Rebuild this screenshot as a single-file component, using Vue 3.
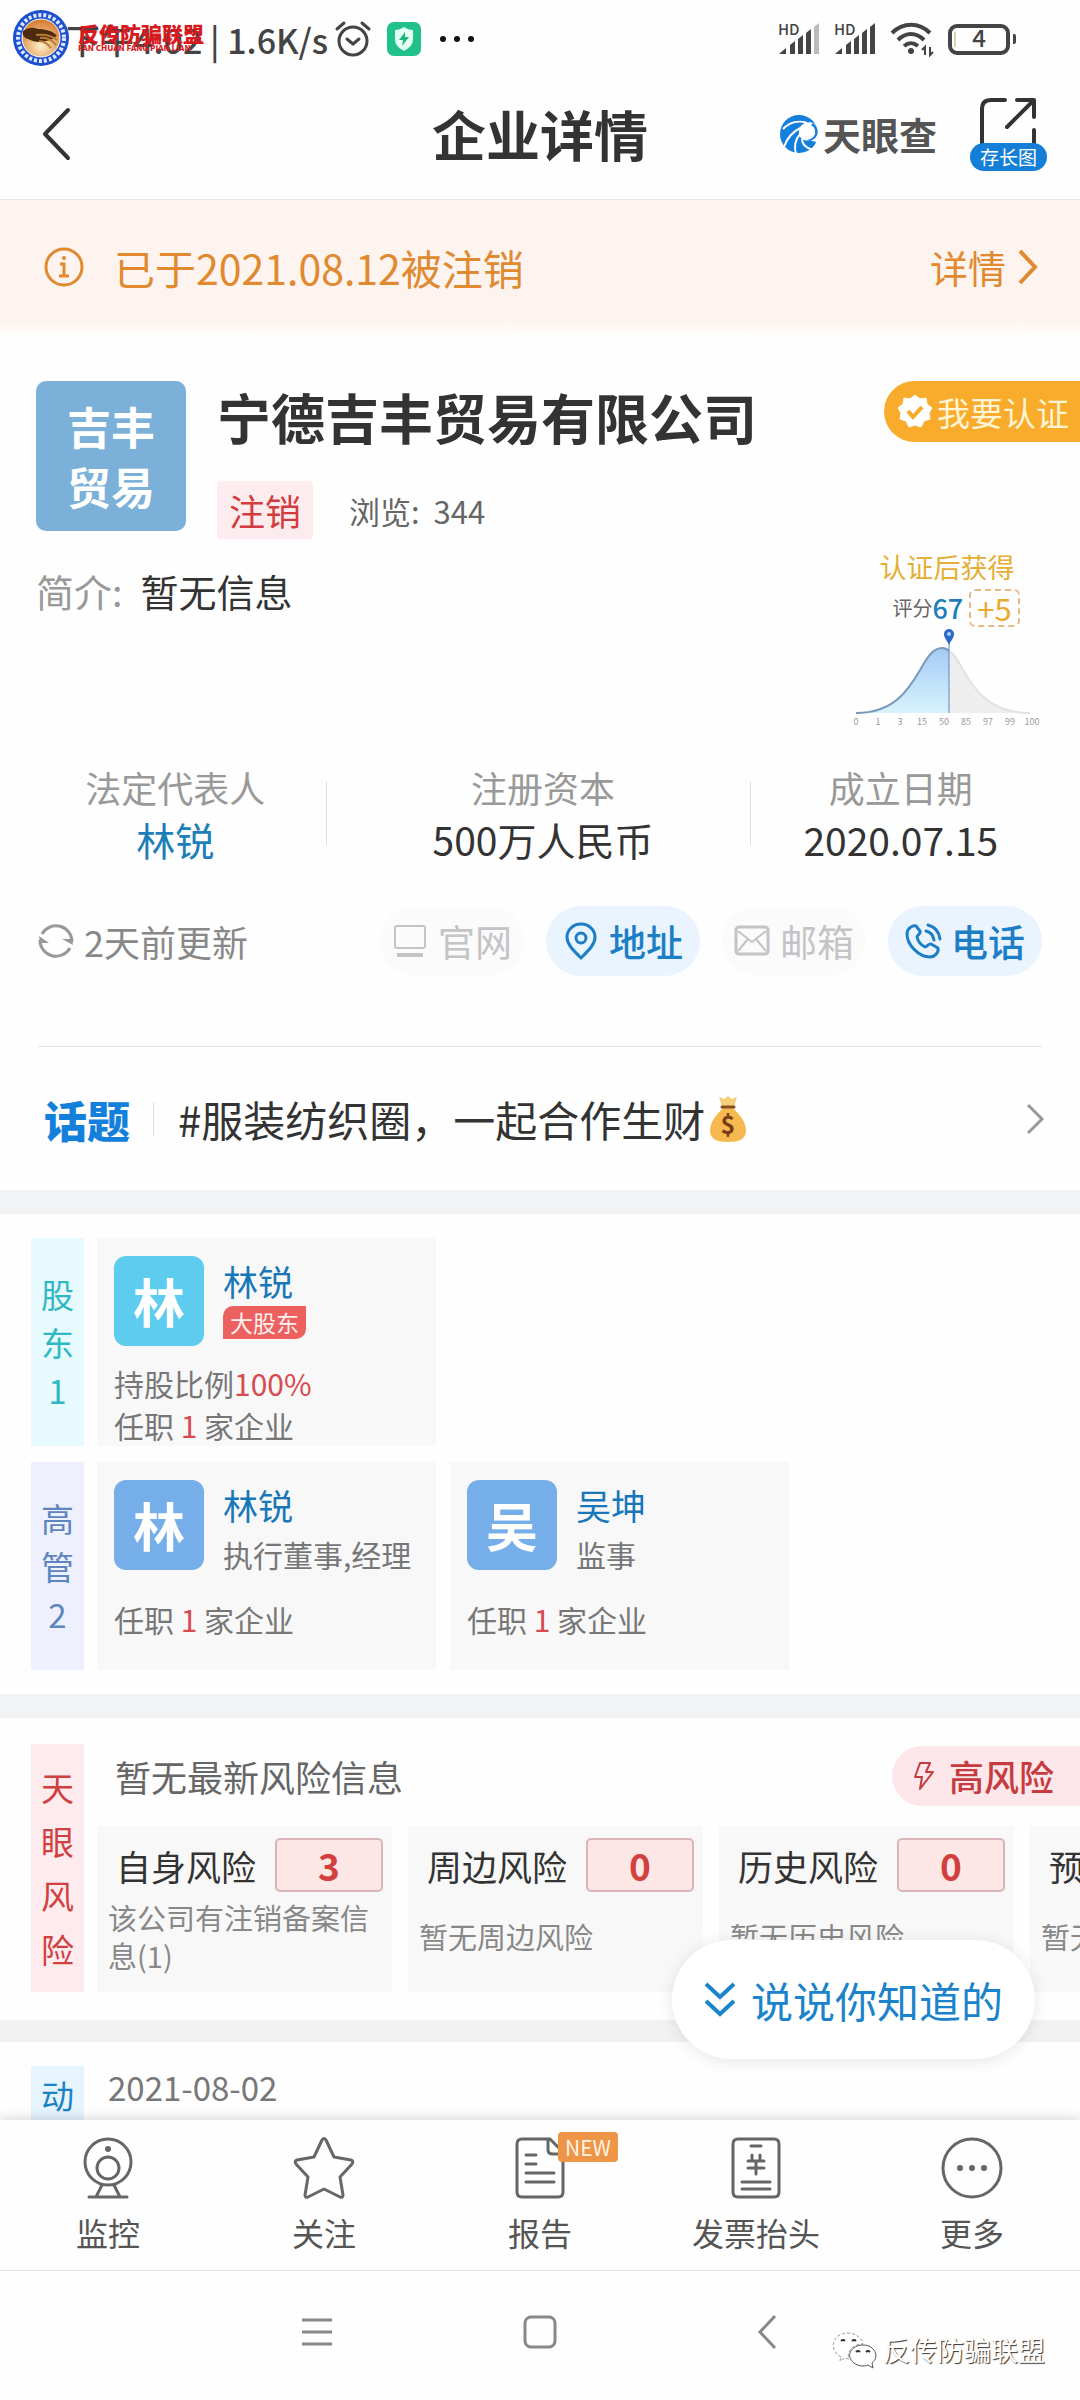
<template>
  <div class="screen">
    <header class="top">
      <div class="status-bar">
        <div class="status-left">
          <span>下午4:02 | 1.6K/s</span>
          <svg class="alarm" viewBox="0 0 36 36" fill="none" stroke="#444" stroke-width="3" stroke-linecap="round">
            <circle cx="18" cy="20" r="14" />
            <path d="M12 18l6 5 6-5M2 8l7-6M34 8l-7-6" />
          </svg>
          <svg class="shield" viewBox="0 0 34 34">
            <rect width="34" height="34" rx="7" fill="#21c18b" />
            <path d="M17 5c3 2 6 3 9 3v9c0 6-4 9-9 12-5-3-9-6-9-12V8c3 0 6-1 9-3z" fill="#e2fff2" />
            <path d="M18 10l-6 8h4l-1 6 7-9h-4z" fill="#21b381" />
          </svg>
          <svg class="dots" viewBox="0 0 34 6" fill="#111">
            <circle cx="3" cy="3" r="3" /><circle cx="17" cy="3" r="3" /><circle cx="31" cy="3" r="3" />
          </svg>
        </div>
        <div class="status-right">
          <svg v-for="n in 2" :key="n" class="signal" viewBox="0 0 42 32" fill="#444">
            <text x="0" y="12" class="hd">HD</text>
            <path d="M1 31l7-6v6zM12 31V22l5-4v13zM20 31V16l5-4v19zM28 31V10l5-4v25z" />
            <path d="M36 31V4l5-4v31z" :fill="n === 1 ? '#bbb' : '#444'" />
          </svg>
          <svg class="wifi" viewBox="0 0 44 34" fill="none" stroke="#444" stroke-width="4">
            <path d="M2 11c11-11 27-11 38 0M8 18c8-8 18-8 26 0M14 24c5-4 9-4 14 0" />
            <circle cx="21" cy="29" r="3" fill="#444" stroke="none" />
            <path d="M35 33v-8l-3 3M40 25v8l3-3" stroke-width="2" />
          </svg>
          <svg class="battery" viewBox="0 0 70 31">
            <rect x="2" y="2" width="58" height="27" rx="7" fill="none" stroke="#444" stroke-width="4" />
            <path d="M65 10h1q2 0 2 2v6q0 2-2 2h-1z" fill="#444" />
            <path d="M7 8v15" stroke="#d9d6b0" stroke-width="2" />
            <text x="31" y="23" class="level">4</text>
          </svg>
        </div>
        <div class="stamp">
          <svg viewBox="0 0 58 58">
            <defs>
              <radialGradient id="glow" cx="50%" cy="70%" r="70%">
                <stop offset="0" stop-color="#fff0c8" />
                <stop offset="1" stop-color="#d4762b" />
              </radialGradient>
            </defs>
            <circle cx="29" cy="29" r="28" fill="#1c50cf" />
            <circle cx="29" cy="29" r="23" fill="none" stroke="#dfe8ff" stroke-width="4" stroke-dasharray="3 2" />
            <circle cx="29" cy="29" r="19" fill="url(#glow)" stroke="#fff" />
            <path d="M11 22c6-4 10-4 15-2 8 0 15 2 19 7-4 2-5 4-11 5-7 2-12 1-18-2-4-1-6-4-5-8z" fill="#4e2a0c" />
            <path d="M28 29c6-1 11 1 16 7M27 32c5 0 9 3 12 7M24 26c8-1 15 0 21 5" stroke="#b87d35" stroke-width="2" fill="none" />
          </svg>
          <div class="stamp-text">
            <strong>反传防骗联盟</strong>
            <small>FAN CHUAN FANG PIAN LIAN</small>
          </div>
        </div>
      </div>

      <div class="title-bar">
        <button class="plain" aria-label="返回">
          <svg class="back" viewBox="0 0 30 54" fill="none" stroke="#333" stroke-width="4" stroke-linecap="round" stroke-linejoin="round">
            <path d="M27 3L4 27l23 24" />
          </svg>
        </button>
        <h1>企业详情</h1>
        <div class="title-right">
          <div class="brand">
            <svg viewBox="0 0 40 40">
              <circle cx="20" cy="20" r="19" fill="#1580dc" />
              <path d="M36 10c-6-4-15-1-16 7-1 7 5 11 11 9 3 1 5 2 7 2l2-10z" fill="#fff" />
              <path d="M34 9c5 4 6 10 3 14-2 3-6 4-9 3 6-1 9-5 8-9 0-3-2-5-4-6z" fill="#1580dc" />
              <path d="M23 13C15 17 8 23 5 33M21 20c-5 6-6 13-4 20M23 25c0 5 4 9 11 11M28 9C20 6 11 8 4 15" fill="none" stroke="#fff" stroke-width="2" />
            </svg>
            <span>天眼查</span>
          </div>
          <button class="plain share">
            <svg viewBox="0 0 58 50" fill="none" stroke="#333" stroke-width="4" stroke-linecap="round" stroke-linejoin="round">
              <path d="M3 48V12q0-9 9-9h14M38 3h17v17M54 4L28 30M55 33v15" />
            </svg>
            <span>存长图</span>
          </button>
        </div>
      </div>
    </header>

    <main class="content">
      <a class="notice" href="#">
        <svg class="info" viewBox="0 0 40 40" fill="none" stroke="#e0892f" stroke-width="3">
          <circle cx="20" cy="20" r="18" />
          <path d="M16 17h4v12M15 29h10" />
          <circle cx="20" cy="11" r="2" fill="#e0892f" stroke="none" />
        </svg>
        <span>已于2021.08.12被注销</span>
        <span class="notice-more">详情</span>
        <svg class="chevron" viewBox="0 0 20 36" fill="none" stroke="#e0892f" stroke-width="4">
          <path d="M2 2l15 16L2 34" />
        </svg>
      </a>

      <section class="profile">
        <div class="profile-main">
          <div class="company">
            <div class="company-logo">吉丰<br />贸易</div>
            <div>
              <h2>宁德吉丰贸易有限公司</h2>
              <div class="company-meta">
                <span class="tag">注销</span>
                <span>浏览:&nbsp; 344</span>
              </div>
            </div>
          </div>
          <p class="intro"><span>简介:</span>暂无信息</p>
        </div>
        <aside class="certify">
          <button class="certify-btn">
            <svg viewBox="0 0 36 36">
              <path d="M18 1l5 4 6-1 1 6 5 4-3 5 1 6-6 2-3 6-6-2-6 2-3-6-6-2 1-6-3-5 5-4 1-6 6 1z" fill="#fff" stroke="#fff" stroke-width="1" stroke-linejoin="round" />
              <path d="M11 17l5 6 9-10" fill="none" stroke="#f9a928" stroke-width="4" />
            </svg>
            我要认证
          </button>
          <div class="score">
            <div class="score-title">认证后获得</div>
            <div class="score-row">评分<b>67</b><em>+5</em></div>
            <svg class="curve" viewBox="0 0 210 100">
              <defs>
                <linearGradient id="fill" x1="0" y1="0" x2="0" y2="1">
                  <stop offset="0" stop-color="#a4cbf5" />
                  <stop offset="1" stop-color="#d8f3fd" />
                </linearGradient>
              </defs>
              <path d="M14 86C77 86 76 21 100 21Q104 21 107 24V86z" fill="url(#fill)" />
              <path d="M107 24C123 32 127 86 188 86H107z" fill="#eeeeef" />
              <path d="M14 86C77 86 76 21 100 21Q104 21 107 24" fill="none" stroke="#7699ba" stroke-width="2" />
              <path d="M107 24C123 32 127 86 188 86" fill="none" stroke="#e2e2e4" stroke-width="2" />
              <path d="M107 16v70" stroke="#5b86bd" />
              <path d="M107 18c-2-5-5-7-5-11a5 5 0 0 1 10 0c0 4-3 6-5 11z" fill="#2c68c4" />
              <circle cx="107" cy="7" r="2" fill="#a9d0ff" />
              <text v-for="(t, i) in ticks" :key="t" :x="14 + i * 22" y="98">{{ t }}</text>
            </svg>
          </div>
        </aside>
      </section>

      <dl class="facts">
        <div v-for="f in facts" :key="f.label">
          <dt>{{ f.label }}</dt>
          <dd :class="{ link: f.link }">{{ f.value }}</dd>
        </div>
      </dl>

      <div class="contact">
        <div class="updated">
          <svg viewBox="0 0 36 36" fill="none" stroke="#999" stroke-width="3">
            <path d="M4 11A16 16 0 0 1 34 19M32 25A16 16 0 0 1 2 17" />
            <path d="M1 13l10 7H2zM35 22l-11-6h10z" fill="#999" stroke="none" />
          </svg>
          2天前更新
        </div>
        <button class="pill" disabled>
          <svg viewBox="0 0 36 36" fill="none" stroke="#c4c4c6" stroke-width="2">
            <rect x="3" y="3" width="30" height="22" rx="2" />
            <path d="M5 32h26" stroke-width="4" />
          </svg>
          官网
        </button>
        <button class="pill active">
          <svg viewBox="0 0 36 36" fill="none" stroke="#1c7fc6" stroke-width="3">
            <path d="M18 35C9 26 4 21 4 14a14 13 0 0 1 28 0c0 7-5 12-14 21z" />
            <circle cx="18" cy="15" r="5" />
          </svg>
          地址
        </button>
        <button class="pill" disabled>
          <svg viewBox="0 0 36 36" fill="none" stroke="#c4c4c6" stroke-width="3">
            <rect x="2" y="4" width="32" height="27" rx="3" />
            <path d="M4 8l14 11L32 8M4 28l10-12M32 28L22 16" stroke-width="2" />
          </svg>
          邮箱
        </button>
        <button class="pill active">
          <svg viewBox="0 0 36 36" fill="none" stroke="#1c7fc6" stroke-width="3" stroke-linejoin="round" stroke-linecap="round">
            <path d="M11 3c-3-1-9 2-9 8 0 11 12 23 23 23 5 0 9-5 8-9l-7-4c-2-1-4 3-6 3-4-2-7-6-8-10 0-2 4-3 3-6z" />
            <path d="M21 8c5 1 7 4 8 9M23 2c7 2 11 6 12 14" />
          </svg>
          电话
        </button>
      </div>

      <a class="topic" href="#">
        <strong>话题</strong>
        <span class="topic-text">#服装纺织圈，一起合作生财</span>
        <svg class="bag" viewBox="0 0 38 48">
          <path d="M13 12L10 2l5 2 4-3 4 3 5-2-3 10z" fill="#f5cf7c" />
          <path d="M14 13C7 20 1 27 1 36c0 8 7 11 18 11s18-3 18-11c0-9-6-16-13-23z" fill="#f6b94f" />
          <path d="M13 12h12" stroke="#8a4b20" stroke-width="3" stroke-linecap="round" />
          <text x="19" y="39">$</text>
        </svg>
        <svg class="chevron" viewBox="0 0 20 36" fill="none" stroke="#999" stroke-width="3">
          <path d="M2 4l14 14L2 32" />
        </svg>
      </a>

      <section class="people">
        <div v-for="g in groups" :key="g.name" class="group">
          <div class="side" :class="g.tone">
            <span v-for="c in g.name" :key="c">{{ c }}</span>
          </div>
          <div class="cards">
            <article v-for="p in g.people" :key="p.name" class="person" :class="g.tone">
              <div class="person-head">
                <div class="avatar">{{ p.name[0] }}</div>
                <div>
                  <a class="person-name" href="#">{{ p.name }}</a>
                  <div v-if="p.badge" class="badge">{{ p.badge }}</div>
                  <div v-else class="role">{{ p.role }}</div>
                </div>
              </div>
              <div class="person-lines">
                <p v-if="p.share">持股比例<i>{{ p.share }}</i></p>
                <p>任职 <i>1</i> 家企业</p>
              </div>
            </article>
          </div>
        </div>
      </section>

      <section class="risk">
        <div class="side red">
          <span v-for="c in '天眼风险'" :key="c">{{ c }}</span>
        </div>
        <div class="risk-body">
          <div class="risk-head">
            <h3>暂无最新风险信息</h3>
            <a class="risk-level" href="#">
              <svg viewBox="0 0 20 30" fill="none" stroke="#c53b3f" stroke-width="2" stroke-linejoin="round">
                <path d="M6 2h10l-4 9h7L6 28l2-12H1z" />
              </svg>
              高风险
            </a>
          </div>
          <div class="risk-cards">
            <article v-for="r in risks" :key="r.title" class="risk-card">
              <div class="risk-title">
                <span>{{ r.title }}</span><b>{{ r.count }}</b>
              </div>
              <p>{{ r.text }}</p>
            </article>
          </div>
        </div>
      </section>

      <section class="news">
        <div class="side blue"><span>动</span><span>态</span></div>
        <time>2021-08-02</time>
      </section>

      <button class="talk">
        <svg viewBox="0 0 32 36" fill="none" stroke="#1b83cc" stroke-width="4">
          <path d="M2 2l14 13L30 2M2 19l14 13 14-13" />
        </svg>
        说说你知道的
      </button>
    </main>

    <nav class="tabs">
      <a v-for="t in tabs" :key="t.label" href="#">
        <span class="tab-icon">
          <svg viewBox="0 0 62 62" fill="none" stroke="#666" stroke-width="3" stroke-linecap="round" stroke-linejoin="round">
            <path :d="t.path" />
            <path v-if="t.dots" :d="t.dots" stroke-width="6" />
          </svg>
          <em v-if="t.isNew">NEW</em>
        </span>
        {{ t.label }}
      </a>
    </nav>

    <footer class="system">
      <button class="plain" aria-label="菜单">
        <svg viewBox="0 0 34 34" stroke="#888" stroke-width="3"><path d="M3 5h30M3 17h30M3 29h30" /></svg>
      </button>
      <button class="plain" aria-label="主页">
        <svg viewBox="0 0 34 34" fill="none" stroke="#888" stroke-width="3"><rect x="2" y="2" width="30" height="30" rx="6" /></svg>
      </button>
      <button class="plain" aria-label="后退">
        <svg viewBox="0 0 34 34" fill="none" stroke="#888" stroke-width="3"><path d="M28 1L13 17l15 16" /></svg>
      </button>
      <div class="watermark">
        <svg viewBox="0 0 46 38" fill="#fff" stroke="#999" stroke-width="1">
          <path d="M9 26C-3 20-1 3 15 2c9 0 15 5 16 11-10 0-17 8-14 15l-4-1-5 3z" stroke-dasharray="3 2" />
          <path d="M40 32c8-6 3-18-9-18s-18 11-9 18c4 3 10 4 14 2l5 3z" stroke="#555" />
          <path d="M9 10q2-2 4 0M20 10q2-2 4 0M24 21q2-2 4 0M34 21q2-2 4 0" fill="none" stroke="#333" stroke-width="2" />
        </svg>
        反传防骗联盟
      </div>
    </footer>
  </div>
</template>

<script setup>
const ticks = ["0", "1", "3", "15", "50", "85", "97", "99", "100"];

const facts = [
  { label: "法定代表人", value: "林锐", link: true },
  { label: "注册资本", value: "500万人民币" },
  { label: "成立日期", value: "2020.07.15" },
];

const groups = [
  {
    name: "股东1",
    tone: "cyan",
    people: [{ name: "林锐", badge: "大股东", share: "100%" }],
  },
  {
    name: "高管2",
    tone: "indigo",
    people: [
      { name: "林锐", role: "执行董事,经理" },
      { name: "吴坤", role: "监事" },
    ],
  },
];

const risks = [
  { title: "自身风险", count: 3, text: "该公司有注销备案信息(1)" },
  { title: "周边风险", count: 0, text: "暂无周边风险" },
  { title: "历史风险", count: 0, text: "暂无历史风险" },
  { title: "预警提醒", count: 0, text: "暂无预警提醒" },
];

const tabs = [
  {
    label: "监控",
    path: "M31 2a23 23 0 1 1 0 46a23 23 0 1 1 0-46M31 20a11 11 0 1 1 0 22a11 11 0 1 1 0-22M25 48l-6 12M37 48l6 12M12 60h38",
    dots: "M31 12v0",
  },
  {
    label: "关注",
    path: "M29 3q2-3 4 0l8 17 17 3q3 1 1 4L47 40l3 18q0 3-3 2l-16-8-16 8q-3 1-3-2l3-18L3 27q-2-3 1-4l17-3z",
  },
  {
    label: "报告",
    path: "M41 2H13q-5 0-5 5v48q0 5 5 5h36q5 0 5-5V15zM39 3v10q0 4 5 4h9M17 18h10M17 27h10M17 36h28M17 45h28",
    isNew: true,
  },
  {
    label: "发票抬头",
    path: "M13 2h36q5 0 5 5v48q0 5-5 5H13q-5 0-5-5V7q0-5 5-5zM26 9h10M27 18v5M35 18v5M23 24h16M31 24v13M23 31h16M17 45h28M17 52h28",
  },
  {
    label: "更多",
    path: "M31 2a29 29 0 1 1 0 58a29 29 0 1 1 0-58",
    dots: "M19 31v0M31 31v0M43 31v0",
  },
];
</script>

<style>
body {
  background: #fefefe;
}
</style>

<style scoped>
.screen {
  display: flex;
  flex-direction: column;
  height: 100vh;
  overflow: hidden;
  background: #fefefe;
  color: #333;
  font-family: "Noto Sans CJK SC", sans-serif;
}

h1,
h2,
h3,
p,
dl,
dd {
  margin: 0;
}

a {
  color: inherit;
  text-decoration: none;
}

i,
em {
  font-style: normal;
}

button {
  border: 0;
  padding: 0;
  font-family: inherit;
  color: inherit;
}

svg {
  flex: none;
  overflow: visible;
}

.plain {
  display: flex;
  background: none;
}

/* status bar */
.status-bar {
  position: relative;
  display: flex;
  align-items: center;
  justify-content: space-between;
  height: 78px;
  padding: 0 62px 0 66px;
  font-size: 34px;
  font-weight: 500;
  color: #444;
}

.status-left,
.status-right {
  display: flex;
  align-items: center;
}

.alarm {
  width: 36px;
  margin-left: 7px;
}

.shield {
  width: 34px;
  margin-left: 16px;
}

.dots {
  width: 34px;
  margin-left: 19px;
}

.status-right {
  gap: 14px;
}

.signal {
  width: 42px;
  height: 32px;
}

.hd {
  font-size: 15px;
}

.wifi {
  width: 44px;
}

.battery {
  width: 70px;
}

.level {
  font-size: 24px;
  text-anchor: middle;
  fill: #444;
}

.stamp {
  position: absolute;
  left: 12px;
  top: 9px;
  display: flex;
  align-items: center;
  gap: 8px;
  color: #d8191d;
}

.stamp svg {
  width: 58px;
}

.stamp-text {
  display: flex;
  flex-direction: column;
}

.stamp strong {
  font-size: 21px;
  font-weight: 900;
  line-height: 20px;
}

.stamp small {
  font-size: 8px;
  font-weight: 900;
  line-height: 10px;
}

/* title bar */
.title-bar {
  display: grid;
  grid-template-columns: 1fr auto 1fr;
  align-items: center;
  height: 122px;
  padding: 0 33px 10px;
  box-sizing: border-box;
  border-bottom: 1px solid #e6e6e6;
}

.back {
  width: 30px;
  margin-left: 8px;
}

h1 {
  font-size: 54px;
  line-height: 60px;
  font-weight: 700;
}

.title-right {
  display: flex;
  align-items: center;
  justify-content: flex-end;
  gap: 33px;
}

.brand {
  display: flex;
  align-items: center;
  gap: 4px;
  font-size: 38px;
  font-weight: 700;
  color: #555;
}

.brand svg {
  width: 40px;
}

.share {
  flex-direction: column;
  align-items: center;
}

.share svg {
  width: 58px;
}

.share span {
  padding: 0 10px;
  margin-top: -4px;
  border-radius: 14px;
  background: #157fd8;
  color: #fff;
  font-size: 19px;
  line-height: 28px;
}

/* notice */
.content {
  position: relative;
  flex: 1;
  min-height: 0;
  overflow: hidden;
}

.notice {
  display: flex;
  align-items: center;
  height: 133px;
  padding: 0 42px 0 44px;
  box-sizing: border-box;
  background: linear-gradient(#fdf3ef 90%, #fefcfa);
  color: #e0892f;
  font-size: 41px;
}

.info {
  width: 40px;
  margin-right: 30px;
}

.chevron {
  width: 20px;
}

.notice-more {
  margin-left: auto;
  margin-right: 12px;
  font-size: 38px;
}

/* company */
.profile {
  display: flex;
  justify-content: space-between;
  padding: 48px 0 0 36px;
}

.company {
  display: flex;
  gap: 31px;
}

.company-logo {
  width: 150px;
  height: 150px;
  padding: 15px 0;
  box-sizing: border-box;
  border-radius: 10px;
  background: #7bb1d8;
  color: #fff;
  font-size: 44px;
  font-weight: 700;
  line-height: 60px;
  text-align: center;
}

h2 {
  font-size: 54px;
  font-weight: 700;
  line-height: 72px;
}

.company-meta {
  display: flex;
  align-items: center;
  gap: 36px;
  margin-top: 28px;
  color: #666;
  font-size: 31px;
}

.tag {
  padding: 0 12px;
  border-radius: 4px;
  background: #fdecee;
  color: #d33c3e;
  font-size: 36px;
  line-height: 58px;
}

.intro {
  margin-top: 28px;
  font-size: 38px;
  line-height: 48px;
}

.intro span {
  margin-right: 18px;
  color: #999;
}

.certify {
  display: flex;
  flex-direction: column;
  align-items: flex-end;
}

.certify-btn {
  display: flex;
  align-items: center;
  gap: 4px;
  height: 61px;
  padding: 0 11px 0 13px;
  border-radius: 31px 0 0 31px;
  background: #f9ab2b;
  color: #fff4d4;
  font-size: 33px;
}

.certify-btn svg {
  width: 36px;
}

.score {
  display: flex;
  flex-direction: column;
  align-items: center;
  width: 210px;
  margin: 108px 28px 0 0;
}

.score-title {
  color: #e5ae35;
  font-size: 27px;
  line-height: 34px;
}

.score-row {
  display: flex;
  align-items: center;
  margin: 5px 0 0 18px;
  color: #666;
  font-size: 20px;
  line-height: 34px;
}

.score-row b {
  margin-right: 6px;
  color: #1c7fba;
  font-size: 27px;
  font-weight: 500;
}

.score-row em {
  padding: 0 6px;
  border: 2px dashed #e8b984;
  border-radius: 6px;
  color: #e8ab30;
  font-size: 31px;
}

.curve {
  width: 210px;
}

.curve text {
  fill: #999;
  font-size: 9px;
  text-anchor: middle;
}

/* facts */
.facts {
  display: grid;
  grid-template-columns: 5fr 7fr 5fr;
  margin: 34px 28px 0 24px;
  text-align: center;
  line-height: 52px;
}

.facts div + div {
  background: linear-gradient(#ddd, #ddd) left center / 1px 64px no-repeat;
}

.facts div:nth-child(2) {
  padding-left: 10px;
}

.facts dt {
  color: #999;
  font-size: 36px;
}

.facts dd {
  font-size: 39px;
}

.facts .link {
  color: #1c7fba;
}

/* contact */
.contact {
  display: flex;
  align-items: center;
  gap: 22px;
  margin: 41px 38px 0;
  padding-bottom: 70px;
  border-bottom: 1px solid #e2e2e2;
}

.updated {
  display: flex;
  align-items: center;
  gap: 10px;
  margin-right: auto;
  color: #888;
  font-size: 36px;
}

.updated svg,
.pill svg {
  width: 36px;
}

.pill {
  display: flex;
  align-items: center;
  gap: 10px;
  height: 70px;
  padding: 0 12px;
  border-radius: 35px;
  background: #fbfbfc;
  color: #c4c4c6;
  font-size: 37px;
}

.pill.active {
  padding: 0 17px;
  background: #eaf4fe;
  color: #1c7fc6;
  font-weight: 500;
}

/* topic */
.topic {
  display: flex;
  align-items: center;
  height: 143px;
  padding: 0 34px 0 44px;
  border-bottom: 24px solid #f2f3f4;
}

.topic strong {
  color: #1380dc;
  font-size: 43px;
  font-weight: 900;
}

.topic-text {
  margin-left: 23px;
  padding-left: 25px;
  background: linear-gradient(#ddd, #ddd) left center / 1px 34px no-repeat;
  font-size: 42px;
}

.bag {
  width: 38px;
  margin: 0 auto 0 4px;
}

.bag text {
  fill: #7a3e17;
  font-size: 25px;
  font-weight: 700;
  text-anchor: middle;
}

/* people */
.people {
  display: flex;
  flex-direction: column;
  gap: 16px;
  padding: 24px 0 24px 31px;
  border-bottom: 24px solid #f2f3f5;
}

.group {
  display: flex;
  gap: 13px;
  min-height: 208px;
}

.side {
  display: flex;
  flex: none;
  flex-direction: column;
  align-items: center;
  justify-content: center;
  width: 53px;
  font-size: 33px;
  line-height: 48px;
}

.side.cyan {
  background: #e7fbfe;
  color: #2fb8c4;
}

.side.indigo {
  background: #eff0fe;
  color: #5c86bd;
}

.side.red {
  background: #fdebee;
  color: #d0403f;
  line-height: 54px;
}

.side.blue {
  justify-content: flex-start;
  padding-top: 5px;
  background: #e6f4fd;
  color: #1b83c4;
}

.cards {
  display: flex;
  gap: 14px;
}

.person {
  width: 339px;
  padding: 18px 17px 0;
  box-sizing: border-box;
  background: #f8f8f9;
}

.person-head {
  display: flex;
  gap: 19px;
}

.avatar {
  flex: none;
  width: 90px;
  height: 90px;
  border-radius: 12px;
  background: #5dccef;
  color: #fff;
  font-size: 52px;
  font-weight: 700;
  line-height: 90px;
  text-align: center;
}

.indigo .avatar {
  background: #75aee9;
}

.person-name {
  display: block;
  color: #1877b9;
  font-size: 35px;
  line-height: 50px;
}

.badge {
  padding: 0 7px;
  border-radius: 10px 0;
  background: #ec6060;
  color: #fff0ec;
  font-size: 23px;
  line-height: 33px;
}

.role {
  margin-top: 4px;
  color: #777;
  font-size: 30px;
  line-height: 40px;
  white-space: nowrap;
}

.person-lines {
  margin-top: 16px;
  color: #777;
  font-size: 30px;
  line-height: 42px;
}

.indigo .person-lines {
  margin-top: 24px;
}

.person-lines i {
  color: #d84a50;
}

/* risk */
.risk {
  display: flex;
  gap: 13px;
  padding: 26px 0 28px 31px;
  border-bottom: 22px solid #f2f2f3;
}

.risk-body {
  flex: 1;
  min-width: 0;
}

.risk-head {
  display: flex;
  align-items: center;
  justify-content: space-between;
  height: 64px;
  padding-left: 18px;
}

h3 {
  color: #666;
  font-size: 36px;
  font-weight: 400;
}

.risk-level {
  display: flex;
  align-items: center;
  gap: 15px;
  padding: 0 26px 0 22px;
  border-radius: 30px 0 0 30px;
  background: #fde7ea;
  color: #c53b3f;
  font-size: 35px;
  font-weight: 500;
  line-height: 60px;
}

.risk-level svg {
  width: 20px;
}

.risk-cards {
  display: flex;
  gap: 16px;
  margin-top: 18px;
  overflow: hidden;
}

.risk-card {
  flex: none;
  width: 295px;
  height: 166px;
  padding: 12px 9px 0 11px;
  box-sizing: border-box;
  background: #f8f8f9;
}

.risk-title {
  display: flex;
  align-items: center;
  justify-content: space-between;
  padding-left: 8px;
  font-size: 35px;
}

.risk-title b {
  width: 108px;
  box-sizing: border-box;
  border: 2px solid #d9b5b9;
  border-radius: 5px;
  background: #fde6e6;
  color: #d13f3f;
  font-size: 37px;
  line-height: 50px;
  text-align: center;
}

.risk-card p {
  display: flex;
  align-items: center;
  height: 76px;
  margin-top: 6px;
  color: #888;
  font-size: 29px;
  line-height: 38px;
}

/* news */
.news {
  display: flex;
  gap: 24px;
  padding: 24px 0 0 31px;
}

time {
  color: #777;
  font-size: 33px;
  line-height: 42px;
}

.talk {
  position: absolute;
  right: 45px;
  bottom: 61px;
  display: flex;
  align-items: center;
  gap: 15px;
  height: 119px;
  padding: 0 32px;
  border-radius: 60px;
  background: #fff;
  box-shadow: 0 2px 16px rgba(0, 0, 0, 0.1);
  color: #1b83cc;
  font-size: 42px;
}

.talk svg {
  width: 32px;
}

/* bottom tabs */
.tabs {
  position: relative;
  display: grid;
  grid-template-columns: repeat(5, 1fr);
  padding: 17px 0 14px;
  border-bottom: 1px solid #e4e6e6;
  background: #fefefe;
  box-shadow: 0 0 12px rgba(0, 0, 0, 0.2);
}

.tabs a {
  display: flex;
  flex-direction: column;
  align-items: center;
  gap: 9px;
  color: #555;
  font-size: 32px;
  line-height: 48px;
}

.tab-icon {
  position: relative;
  height: 62px;
}

.tab-icon svg {
  width: 62px;
}

.tab-icon em {
  position: absolute;
  left: 49px;
  top: -5px;
  padding: 0 7px;
  border-radius: 4px;
  background: #ee9547;
  color: #fff3e4;
  font-size: 21px;
  line-height: 30px;
}

/* system keys */
.system {
  position: relative;
  display: flex;
  justify-content: center;
  gap: 190px;
  padding: 44px 0 51px;
  background: #fefefe;
}

.system .plain svg {
  width: 34px;
}

.watermark {
  position: absolute;
  right: 35px;
  bottom: 31px;
  display: flex;
  align-items: center;
  gap: 5px;
  color: #fff;
  font-size: 27px;
  line-height: 36px;
  text-shadow: 1px 1px 1px #333;
}

.watermark svg {
  width: 46px;
}
</style>
